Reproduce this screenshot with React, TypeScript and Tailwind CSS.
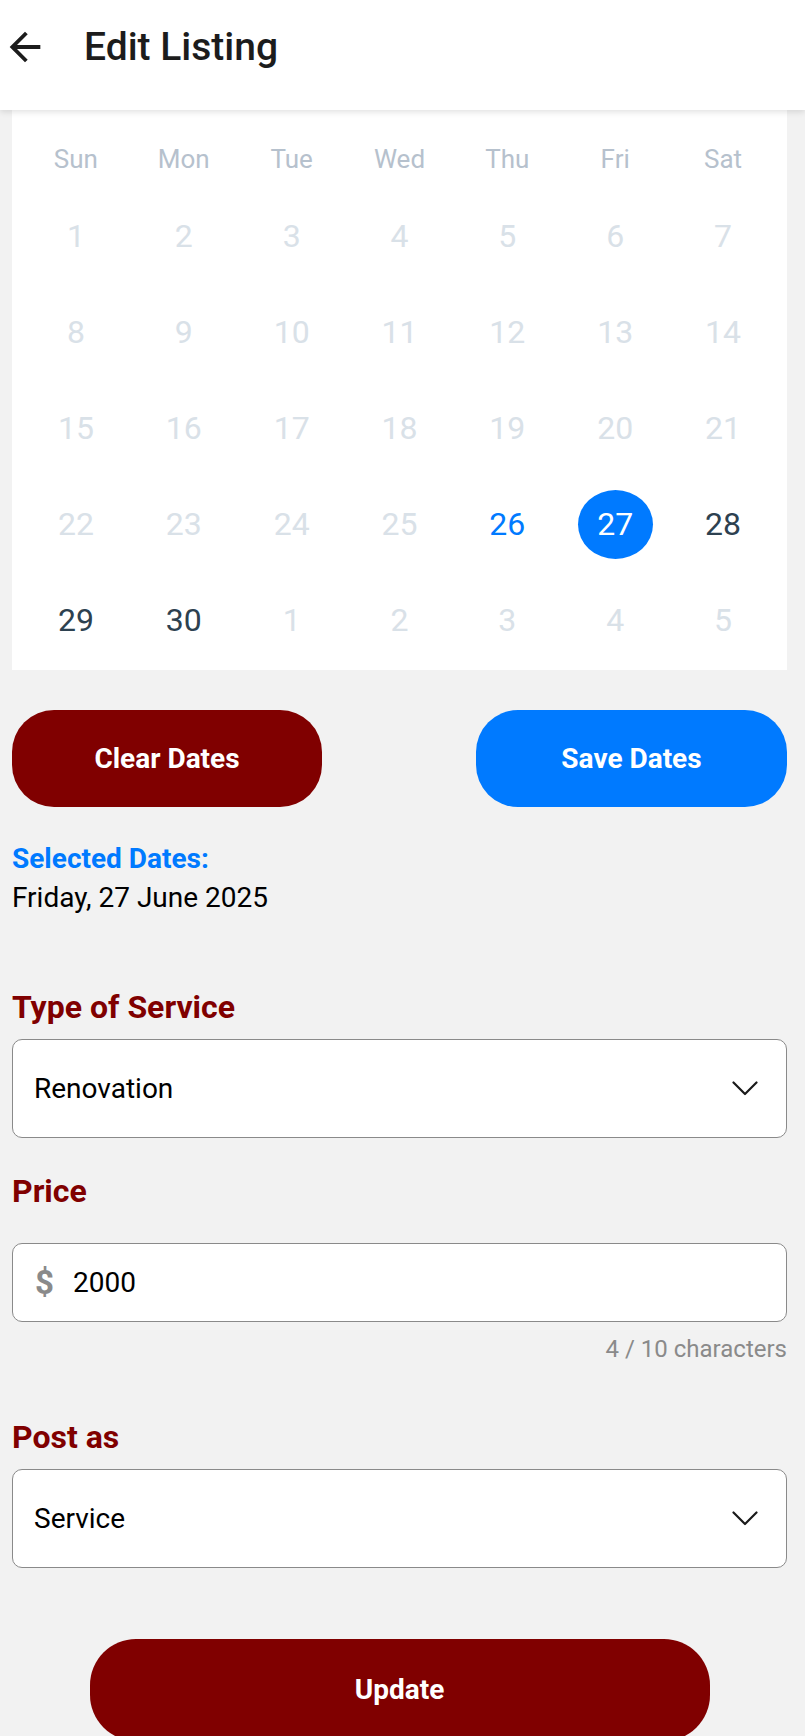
import React, { useState } from "react";

type Day = { n: number; kind: "off" | "on" | "today" | "selected" };

const weekDays = ["Sun", "Mon", "Tue", "Wed", "Thu", "Fri", "Sat"];

const off = (from: number, to: number): Day[] =>
  Array.from({ length: to - from + 1 }, (_, i) => ({ n: from + i, kind: "off" }));

const weeks: Day[][] = [
  off(1, 7),
  off(8, 14),
  off(15, 21),
  [
    ...off(22, 25),
    { n: 26, kind: "today" },
    { n: 27, kind: "selected" },
    { n: 28, kind: "on" },
  ],
  [{ n: 29, kind: "on" }, { n: 30, kind: "on" }, ...off(1, 5)],
];

const Chevron = () => (
  <svg width="26" height="15" viewBox="0 0 26 15" fill="none">
    <path d="M1.5 1.5 L13 13 L24.5 1.5" stroke="#1a1a1a" strokeWidth="2.2" strokeLinecap="round" strokeLinejoin="round" />
  </svg>
);

const SelectBox = ({ value }: { value: string }) => (
  <div className="flex h-[99px] items-center justify-between rounded-[10px] border-[1.5px] border-[#8a8a8a] bg-white pl-[21px] pr-[28px]">
    <span className="text-[28px] text-black">{value}</span>
    <Chevron />
  </div>
);

const App: React.FC = () => {
  const [price, setPrice] = useState("2000");

  return (
    <div className="min-h-[1736px] bg-[#f2f2f2] font-['Roboto',sans-serif]">
      {/* Header */}
      <div className="relative z-10 flex h-[110px] items-center bg-white pb-[16px] shadow-[0_2px_6px_rgba(0,0,0,0.12)]">
        <button className="ml-[2px] flex h-[46px] w-[46px] items-center justify-center">
          <svg width="46" height="46" viewBox="0 0 24 24">
            <path d="M20 11H7.83l5.59-5.59L12 4l-8 8 8 8 1.41-1.41L7.83 13H20v-2z" fill="#1c1c1c" />
          </svg>
        </button>
        <h1 className="ml-[36px] text-[39px] font-medium text-[#1c1c1c]">Edit Listing</h1>
      </div>

      <div className="pl-[12px] pr-[18px]">
        {/* Calendar */}
        <div className="bg-white px-[10px] pt-[20px] pb-[2px]">
          <div className="grid h-[58px] grid-cols-7 items-center">
            {weekDays.map((d) => (
              <div key={d} className="text-center text-[26px] leading-none text-[#b6c1cd]">
                {d}
              </div>
            ))}
          </div>
          {weeks.map((week, wi) => (
            <div key={wi} className="grid h-[96px] grid-cols-7 items-center">
              {week.map((day, di) => (
                <div key={di} className="flex items-center justify-center">
                  {day.kind === "selected" ? (
                    <div className="flex h-[69px] w-[75px] items-center justify-center rounded-[50%] bg-[#007aff] text-[32px] text-white">
                      {day.n}
                    </div>
                  ) : (
                    <span
                      className={
                        "text-[32px] " +
                        (day.kind === "off"
                          ? "text-[#d9e1e8]"
                          : day.kind === "today"
                          ? "text-[#007aff]"
                          : "text-[#2d4150]")
                      }
                    >
                      {day.n}
                    </span>
                  )}
                </div>
              ))}
            </div>
          ))}
        </div>

        {/* Date buttons */}
        <div className="mt-[40px] flex justify-between">
          <button className="h-[97px] w-[310px] rounded-[42px] bg-[#800000] text-[28px] font-bold text-white">
            Clear Dates
          </button>
          <button className="h-[97px] w-[311px] rounded-[42px] bg-[#007aff] text-[28px] font-bold text-white">
            Save Dates
          </button>
        </div>

        <div className="mt-[32px] text-[28px] leading-[39px]">
          <p className="font-bold text-[#007aff]">Selected Dates:</p>
          <p className="text-black">Friday, 27 June 2025</p>
        </div>

        {/* Type of service */}
        <p className="mt-[70px] text-[32px] font-bold leading-[40px] text-[#800000]">Type of Service</p>
        <div className="mt-[12px]">
          <SelectBox value="Renovation" />
        </div>

        {/* Price */}
        <p className="mt-[33px] text-[32px] font-bold leading-[40px] text-[#800000]">Price</p>
        <div className="mt-[32px] flex h-[79px] items-center rounded-[10px] border-[1.5px] border-[#8a8a8a] bg-white pl-[22px]">
          <span className="text-[33px] font-bold text-[#8a8a8a]">$</span>
          <input
            value={price}
            onChange={(e) => setPrice(e.target.value)}
            className="ml-[19px] flex-1 bg-transparent text-[28px] text-black outline-none"
          />
        </div>
        <p className="mt-[11px] text-right text-[24px] leading-[32px] text-[#8a8a8a]">
          {price.length} / 10 characters
        </p>

        {/* Post as */}
        <p className="mt-[52px] text-[32px] font-bold leading-[40px] text-[#800000]">Post as</p>
        <div className="mt-[12px]">
          <SelectBox value="Service" />
        </div>

        <div className="mt-[71px] flex justify-center pb-[20px]">
          <button className="h-[102px] w-[620px] rounded-[46px] bg-[#800000] text-[28px] font-bold text-white">
            Update
          </button>
        </div>
      </div>
    </div>
  );
};

export default App;
